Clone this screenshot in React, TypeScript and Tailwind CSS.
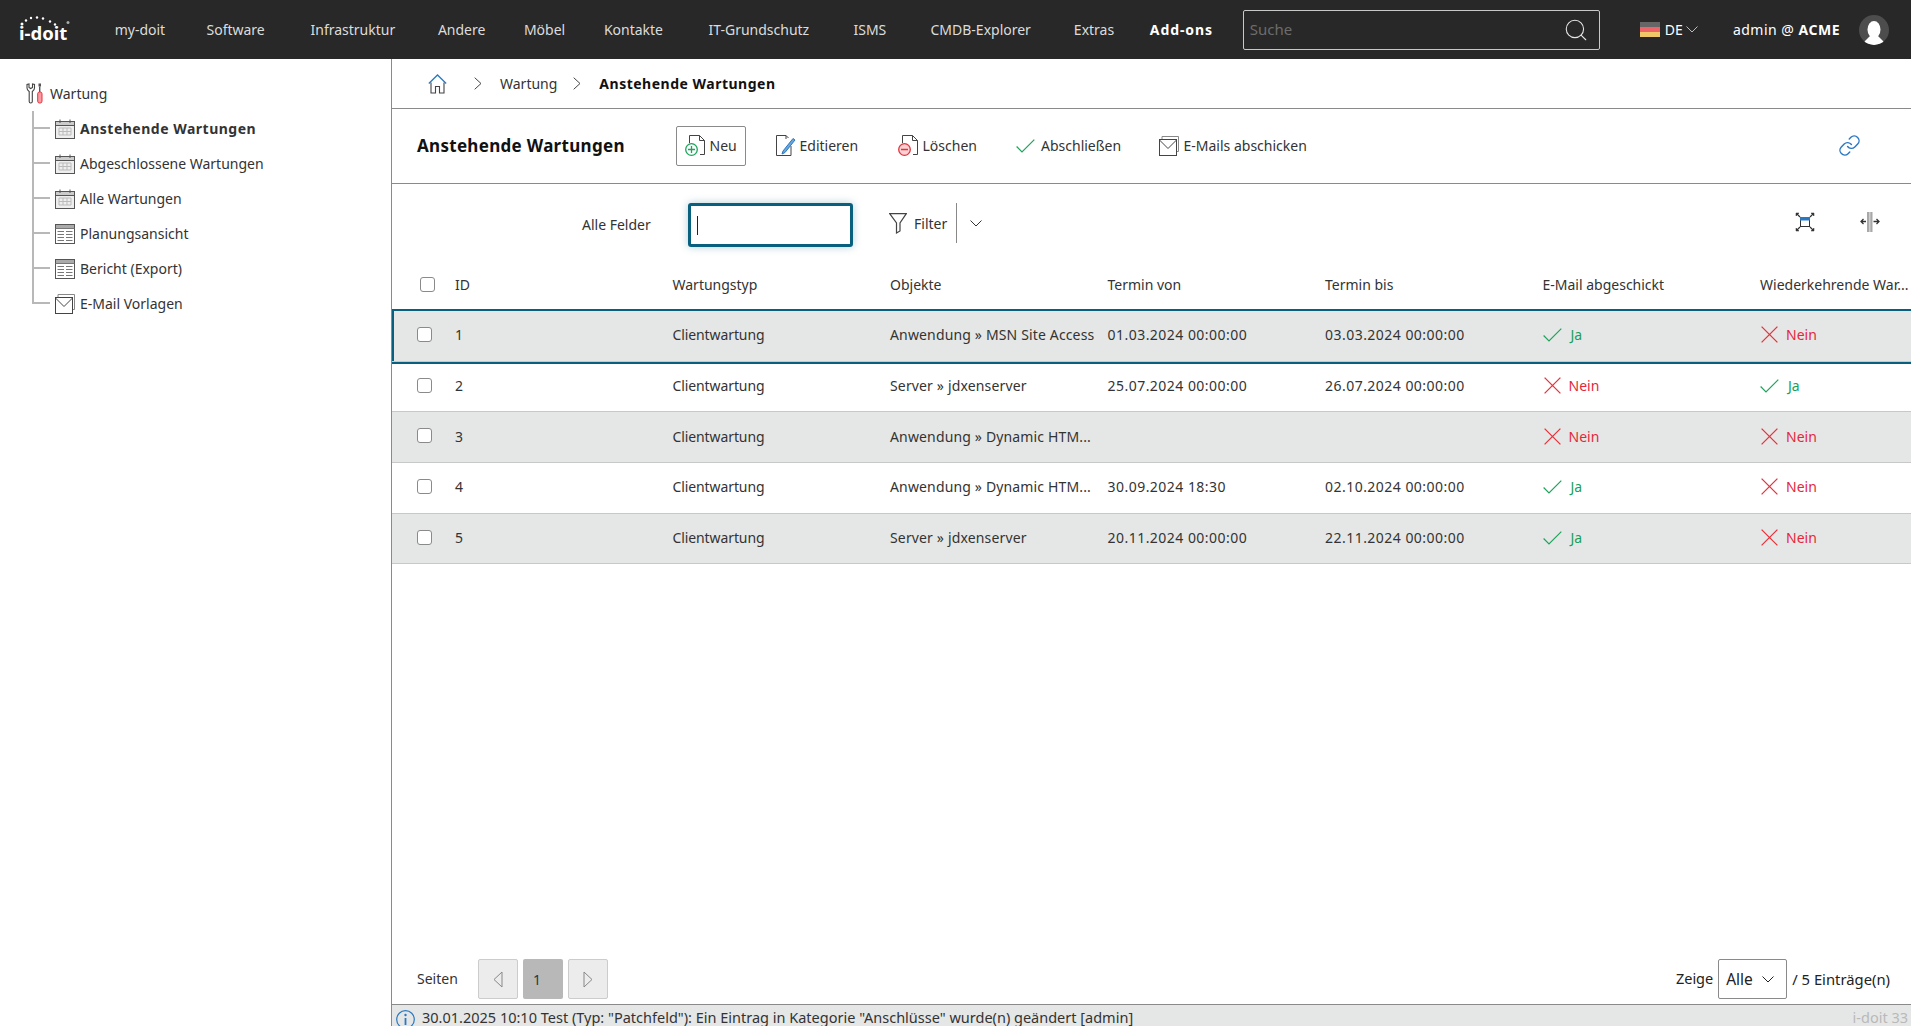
import { Link as LinkIcon, Search } from "lucide-react";

const navItems = [
  { label: "my-doit", width: "w-[91.8px]" },
  { label: "Software", width: "w-[104px]" },
  { label: "Infrastruktur", width: "w-[127.4px]" },
  { label: "Andere", width: "w-[86px]" },
  { label: "Möbel", width: "w-[80px]" },
  { label: "Kontakte", width: "w-[104.6px]" },
  { label: "IT-Grundschutz", width: "w-[145px]" },
  { label: "ISMS", width: "w-[77px]" },
  { label: "CMDB-Explorer", width: "w-[143.4px]" },
  { label: "Extras", width: "w-[76px]" },
];

const treeItems = [
  { label: "Anstehende Wartungen", icon: "calendar", active: true },
  { label: "Abgeschlossene Wartungen", icon: "calendar" },
  { label: "Alle Wartungen", icon: "calendar" },
  { label: "Planungsansicht", icon: "table" },
  { label: "Bericht (Export)", icon: "table" },
  { label: "E-Mail Vorlagen", icon: "mail" },
];

const columns = ["ID", "Wartungstyp", "Objekte", "Termin von", "Termin bis", "E-Mail abgeschickt", "Wiederkehrende War..."];

const rows = [
  { id: "1", obj: "Anwendung » MSN Site Access", from: "01.03.2024 00:00:00", to: "03.03.2024 00:00:00", mail: true, rec: false },
  { id: "2", obj: "Server » jdxenserver", from: "25.07.2024 00:00:00", to: "26.07.2024 00:00:00", mail: false, rec: true },
  { id: "3", obj: "Anwendung » Dynamic HTM...", from: "", to: "", mail: false, rec: false },
  { id: "4", obj: "Anwendung » Dynamic HTM...", from: "30.09.2024 18:30", to: "02.10.2024 00:00:00", mail: true, rec: false },
  { id: "5", obj: "Server » jdxenserver", from: "20.11.2024 00:00:00", to: "22.11.2024 00:00:00", mail: true, rec: false },
];

function Logo() {
  return (
    <div className="relative w-[114.700px] shrink-0 pl-[19px] pt-[7px] text-[18.500px] leading-[24px] font-bold text-white">
      i-doit
      <svg className="absolute left-[20px] top-[1px]" width="52" height="14" viewBox="0 0 52 14" fill="white">
        <circle cx="2" cy="9" r="1.500" />
        <circle cx="6" cy="5.500" r="1.200" />
        <circle cx="11" cy="3" r="1.200" />
        <circle cx="17" cy="2.500" r="1.200" />
        <circle cx="23" cy="3.500" r="1.200" />
        <circle cx="30" cy="6.500" r="1.200" />
        <circle cx="35" cy="9.500" r="1.200" />
        <circle cx="48" cy="7.500" r="1.500" fill="#aaa" />
      </svg>
    </div>
  );
}

function ChevronSmall({ className = "" }: { className?: string }) {
  return (
    <svg className={className} width="12" height="7" viewBox="0 0 12 7" fill="none" stroke="currentColor">
      <path d="M0.500 0.500L6 6L11.500 0.500" />
    </svg>
  );
}

function CalendarIcon() {
  return (
    <svg width="20" height="20" viewBox="0 0 20 20" fill="none">
      <rect x="0.500" y="2.500" width="19" height="17" fill="#eee" stroke="#555" />
      <rect x="1" y="3" width="18" height="3" fill="#ccc" />
      <path d="M0.500 6.500H19.500M5 0.500V4M15 0.500V4" stroke="#555" />
      <path d="M4 9H16V16H4ZM4 12.500H16M8 9V16M12 9V16" stroke="#bbb" />
    </svg>
  );
}

function TableIcon() {
  return (
    <svg width="20" height="20" viewBox="0 0 20 20" fill="none">
      <rect x="0.500" y="0.500" width="19" height="19" fill="#fff" stroke="#555" />
      <rect x="1" y="1" width="18" height="3.500" fill="#aaa" />
      <path d="M0.500 4.500H19.500M2.500 7.500H9M11 7.500H17.500M2.500 10.500H9M11 10.500H17.500M2.500 13.500H9M11 13.500H17.500M2.500 16.500H9M11 16.500H17.500" stroke="#777" />
    </svg>
  );
}

function MailIcon({ className = "" }: { className?: string }) {
  return (
    <svg className={className} width="20" height="20" viewBox="0 0 20 20" fill="none" stroke="#444">
      <path d="M3 3.500V0.500H19.500V15.500H17" stroke="#888" />
      <rect x="0.500" y="3.500" width="17" height="16" fill="#fff" />
      <path d="M0.500 4L9 12.500L17.500 4" />
    </svg>
  );
}

function TreeIcon({ name }: { name: string }) {
  if (name === "calendar") return <CalendarIcon />;
  if (name === "table") return <TableIcon />;
  return <MailIcon />;
}

function ToolsIcon() {
  return (
    <svg width="17" height="21" viewBox="0 0 17 21" fill="none">
      <path d="M1 1.500V5C1 7 2.500 8 3.200 8.500V18.500C3.200 20.500 6.300 20.500 6.300 18.500V8.500C7 8 8.500 7 8.500 5V1.500L6.500 1V4.500L4.700 5.500L3 4.500V1Z" stroke="#444" strokeWidth="1.100" />
      <rect x="12.500" y="0.500" width="2.500" height="3" fill="#555" />
      <path d="M13.700 3.500V9" stroke="#555" strokeWidth="1.400" />
      <rect x="11.700" y="9" width="4.300" height="11" rx="1.800" fill="#fb9aa0" stroke="#e5333c" />
    </svg>
  );
}

function HomeIcon() {
  return (
    <svg width="19" height="20" viewBox="0 0 19 20" fill="none">
      <path d="M0.800 9.500L9.500 1L18.200 9.500" stroke="#2a78c2" strokeWidth="1.300" />
      <path d="M3 8.500V19H7.500V12.500H11.500V19H16V8.500" stroke="#444" strokeWidth="1.100" />
    </svg>
  );
}

function PageOutline() {
  return <path d="M4.500 8V0.500H14.500L19.500 5.500V19.500H15M14.500 0.500V5.500H19.500" stroke="#444" />;
}

function NewIcon() {
  return (
    <svg width="21" height="21" viewBox="0 0 21 21" fill="none">
      <PageOutline />
      <circle cx="6.500" cy="14.500" r="5.800" fill="#fff" stroke="#1ea35b" strokeWidth="1.300" />
      <path d="M6.500 11V18M3 14.500H10" stroke="#1ea35b" strokeWidth="1.300" />
    </svg>
  );
}

function EditIcon() {
  return (
    <svg width="20" height="21" viewBox="0 0 20 21" fill="none">
      <path d="M0.500 20.500V0.500H10L12.500 3M15 11V20.500H0.500M10 0.500V4" stroke="#444" />
      <path d="M7 16L17 3.500L19 5L9 17.500L6 19Z" fill="#6aa6dc" stroke="#2a78c2" />
    </svg>
  );
}

function DeleteIcon() {
  return (
    <svg width="21" height="21" viewBox="0 0 21 21" fill="none">
      <PageOutline />
      <circle cx="6.500" cy="14.500" r="5.800" fill="#fbd2d4" stroke="#e5333c" strokeWidth="1.300" />
      <path d="M3 14.500H10" stroke="#e5333c" strokeWidth="1.500" />
    </svg>
  );
}

function CheckIcon() {
  return (
    <svg width="19" height="14" viewBox="0 0 19 14" fill="none">
      <path d="M0.600 7.500L6 13L18.300 0.600" stroke="#1ea35b" strokeWidth="1.200" />
    </svg>
  );
}

function CrossIcon() {
  return (
    <svg width="17" height="17" viewBox="0 0 17 17" fill="none">
      <path d="M0.600 0.600L16.400 16.400M16.400 0.600L0.600 16.400" stroke="#e5333c" strokeWidth="1.300" />
    </svg>
  );
}

function FunnelIcon() {
  return (
    <svg width="18" height="21" viewBox="0 0 18 21" fill="none">
      <path d="M0.700 0.700H17.300L11 10V18L7.500 20V10Z" stroke="#444" strokeWidth="1.200" />
    </svg>
  );
}

function ChevronRightSmall() {
  return (
    <svg width="8" height="13" viewBox="0 0 8 13" fill="none">
      <path d="M0.700 0.700L7 6.500L0.700 12.300" stroke="#444" />
    </svg>
  );
}

function FullscreenIcon() {
  return (
    <svg width="20" height="20" viewBox="0 0 20 20" fill="none">
      <path d="M1 1H4L1 4ZM19 1H16L19 4ZM19 19H16L19 16ZM1 19H4L1 16Z" fill="#333" stroke="#333" strokeWidth="0.500" />
      <path d="M2 2L5 5M18 2L15 5M18 18L15 15M2 18L5 15" stroke="#333" strokeWidth="1.200" />
      <rect x="5.500" y="5.500" width="9" height="9" fill="#fff" stroke="#333" />
      <rect x="5" y="5" width="10" height="3.500" fill="#2a78c2" />
    </svg>
  );
}

function ColumnResizeIcon() {
  return (
    <svg width="20" height="20" viewBox="0 0 20 20" fill="none">
      <rect x="7" y="0" width="5.500" height="20" fill="#a8a8a8" />
      <rect x="9.200" y="0" width="1.200" height="20" fill="#d8d8d8" />
      <path d="M1 9.500H6M3.500 7L1 9.500L3.500 12M13.500 9.500H19M16.500 7L19 9.500L16.500 12" stroke="#333" strokeWidth="1.300" />
    </svg>
  );
}

function InfoIcon() {
  return (
    <svg width="19" height="19" viewBox="0 0 19 19" fill="none">
      <circle cx="9.500" cy="9.500" r="8.800" stroke="#2a78c2" strokeWidth="1.200" />
      <path d="M9.500 8V15" stroke="#2a78c2" strokeWidth="1.800" />
      <circle cx="9.500" cy="5" r="1.200" fill="#2a78c2" />
    </svg>
  );
}

function Box() {
  return <span className="block h-[15px] w-[15px] rounded-[3px] border-[1.500px] border-[#8a8a8a] bg-white" />;
}

function YesNo({ value }: { value: boolean }) {
  return value ? (
    <div className="flex items-center gap-[9px] text-[#1a9f55]">
      <CheckIcon />
      <span>Ja</span>
    </div>
  ) : (
    <div className="flex items-center gap-[8px] pl-[1px] text-[#e6263c]">
      <CrossIcon />
      <span>Nein</span>
    </div>
  );
}

function TopBar() {
  return (
    <header className="flex h-[59px] shrink-0 items-center bg-[#282828] text-white">
      <Logo />
      {navItems.map((item) => (
        <span key={item.label} className={`${item.width} shrink-0 text-[14px] text-[#dcdcdc]`}>
          {item.label}
        </span>
      ))}
      <span className="w-[93px] shrink-0 text-[14px] font-bold tracking-[0.9px]">Add-ons</span>
      <div className="flex h-[40px] w-[357px] shrink-0 items-center rounded-[2px] border border-[#c8c8c8] pl-[6px] pr-[10px]">
        <span className="flex-1 text-[15px] text-[#6c6c6c]">Suche</span>
        <Search size={26} strokeWidth={1} className="text-[#e6e6e6]" />
      </div>
      <div className="ml-[40px] flex h-[16px] w-[20px] shrink-0 flex-col">
        <div className="flex-1 bg-[#666]" />
        <div className="flex-1 bg-[#ee6468]" />
        <div className="flex-1 bg-[#f0c868]" />
      </div>
      <span className="ml-[5px] text-[14px]">DE</span>
      <ChevronSmall className="ml-[3px] shrink-0 text-[#bbb]" />
      <span className="ml-[35px] whitespace-nowrap text-[14px] tracking-[0.5px]">
        admin @ <b>ACME</b>
      </span>
      <div className="ml-[19px] flex h-[30px] w-[30px] shrink-0 items-end justify-center overflow-hidden rounded-full bg-[#4d4d4d]">
        <svg width="20" height="24" viewBox="0 0 20 24" fill="white">
          <ellipse cx="10" cy="8.500" rx="6.500" ry="8.500" />
          <path d="M7 14L0 21C0 23 4 24 10 24C16 24 20 23 20 21L13 14Z" />
        </svg>
      </div>
    </header>
  );
}

function Sidebar() {
  return (
    <aside className="w-[392px] shrink-0 border-r border-[#8a8a8a] pt-[17px] text-[14px] text-[#333]">
      <div className="flex h-[35px] items-center gap-[7px] pl-[26px]">
        <ToolsIcon />
        <span>Wartung</span>
      </div>
      {treeItems.map((item, i) => (
        <div key={item.label} className="flex h-[35px] items-center">
          <div className="ml-[32px] flex h-full w-[18px] flex-col">
            <div className="h-1/2 border-b-2 border-l-2 border-[#b8b8b8]" />
            {i < treeItems.length - 1 && <div className="h-1/2 border-l-2 border-[#b8b8b8]" />}
          </div>
          <div className="ml-[5px]">
            <TreeIcon name={item.icon} />
          </div>
          <span className={item.active ? "ml-[5px] font-bold tracking-[0.5px]" : "ml-[5px]"}>{item.label}</span>
        </div>
      ))}
    </aside>
  );
}

function Toolbar() {
  return (
    <div className="flex h-[75px] shrink-0 items-center border-b border-[#8a8a8a] pb-[1px] pl-[25px] pr-[50px] text-[#333]">
      <h1 className="w-[258.500px] shrink-0 text-[17px] font-bold tracking-[0.3px] text-[#111]">Anstehende Wartungen</h1>
      <button className="flex h-[40px] w-[70px] shrink-0 items-center gap-[4px] rounded-[2px] border border-[#8a8a8a] pl-[8px]">
        <NewIcon />
        <span>Neu</span>
      </button>
      <div className="ml-[30px] flex w-[122px] shrink-0 items-center gap-[4px]">
        <EditIcon />
        <span>Editieren</span>
      </div>
      <div className="flex w-[118.500px] shrink-0 items-center gap-[4px]">
        <DeleteIcon />
        <span>Löschen</span>
      </div>
      <div className="flex w-[142.500px] shrink-0 items-center gap-[6px]">
        <CheckIcon />
        <span>Abschließen</span>
      </div>
      <div className="flex shrink-0 items-center gap-[5px]">
        <MailIcon />
        <span>E-Mails abschicken</span>
      </div>
      <LinkIcon size={23} strokeWidth={1.500} className="ml-auto text-[#2a78c2]" />
    </div>
  );
}

function FilterRow() {
  return (
    <div className="flex h-[78px] shrink-0 items-start pl-[190px] pr-[31px] text-[#333]">
      <span className="mt-[30px] w-[106px] shrink-0">Alle Felder</span>
      <div className="mt-[19px] flex h-[44px] w-[165px] shrink-0 items-center rounded-[3px] border-[3px] border-[#08607e] pl-[6px] shadow-[0_0_8px_rgba(8,96,126,0.3)]">
        <span className="h-[19px] w-px bg-[#222]" />
      </div>
      <div className="ml-[36px] mt-[29px] flex shrink-0 items-center gap-[7px]">
        <FunnelIcon />
        <span>Filter</span>
      </div>
      <div className="ml-[9px] mt-[19px] h-[40px] w-px shrink-0 bg-[#888]" />
      <ChevronSmall className="ml-[13px] mt-[36px] shrink-0" />
      <div className="ml-auto mt-[28px] flex gap-[45px]">
        <FullscreenIcon />
        <ColumnResizeIcon />
      </div>
    </div>
  );
}

function DataTable() {
  return (
    <div className="text-[#333]">
      <div className="grid h-[49px] grid-cols-[63px_repeat(6,217.500px)_1fr] items-center pb-[4px]">
        <div className="pl-[28px]">
          <Box />
        </div>
        {columns.map((c) => (
          <span key={c} className="whitespace-nowrap">{c}</span>
        ))}
      </div>
      {rows.map((row, i) => (
        <div
          key={row.id}
          className={`relative grid h-[50.700px] grid-cols-[63px_repeat(6,217.500px)_1fr] items-center border-b border-[#c8c8c8] pb-[2px] ${
            i % 2 === 0 ? "bg-[#e5e7e6]" : "bg-white"
          } ${i === 0 ? "z-10 shadow-[inset_2px_0_0_#08607e,0_-2px_0_#08607e,0_2px_0_#08607e]" : ""}`}
        >
          <div className="-mt-[1px] pl-[24.500px]">
            <Box />
          </div>
          <span>{row.id}</span>
          <span className="tracking-[-0.1px]">Clientwartung</span>
          <span className="whitespace-nowrap tracking-[0.15px]">{row.obj}</span>
          <span className="tracking-[0.47px]">{row.from}</span>
          <span className="tracking-[0.47px]">{row.to}</span>
          <YesNo value={row.mail} />
          <YesNo value={row.rec} />
        </div>
      ))}
    </div>
  );
}

function Pager() {
  return (
    <div className="flex h-[45px] shrink-0 items-start pl-[25px] pr-[21px] text-[#333]">
      <span className="mt-[9px] w-[61px] shrink-0">Seiten</span>
      <div className="flex gap-[5px]">
        <div className="flex h-[40px] w-[40px] items-center justify-center rounded-[2px] border border-[#ccc] bg-[#ececec]">
          <svg width="10" height="17" viewBox="0 0 10 17" fill="none">
            <path d="M9 1L1 8.500L9 16Z" stroke="#888" />
          </svg>
        </div>
        <div className="flex h-[40px] w-[40px] items-center justify-center rounded-[2px] bg-[#b8b8b8] pr-[12px]">1</div>
        <div className="flex h-[40px] w-[40px] items-center justify-center rounded-[2px] border border-[#ccc] bg-[#ececec]">
          <svg width="10" height="17" viewBox="0 0 10 17" fill="none">
            <path d="M1 1L9 8.500L1 16Z" stroke="#888" />
          </svg>
        </div>
      </div>
      <span className="ml-auto mt-[9px] text-[14.500px] text-[#222]">Zeige</span>
      <div className="ml-[5px] flex h-[40px] w-[69px] items-center rounded-[2px] border border-[#8a8a8a] pl-[7px] pt-[1px] text-[15.500px] text-[#222]">
        <span>Alle</span>
        <ChevronSmall className="ml-[9px] shrink-0" />
      </div>
      <span className="ml-[5px] mt-[9px] text-[14.800px] text-[#222]">/ 5 Einträge(n)</span>
    </div>
  );
}

function StatusBar() {
  return (
    <div className="flex h-[22px] shrink-0 items-start gap-[7px] overflow-hidden border-t border-[#8a8a8a] bg-[#e5e7e6] pl-[4px] pr-[3px] pt-[5px] text-[14.500px] text-[#333]">
      <InfoIcon />
      <span className="-mt-[3px] whitespace-nowrap">
        30.01.2025 10:10 Test (Typ: "Patchfeld"): Ein Eintrag in Kategorie "Anschlüsse" wurde(n) geändert [admin]
      </span>
      <span className="-mt-[3px] ml-auto text-[#b9b9b9]">i-doit 33</span>
    </div>
  );
}

export default function App() {
  return (
    <div className="flex h-screen w-full flex-col overflow-hidden bg-white font-['Noto_Sans',sans-serif] text-[14px]">
      <TopBar />
      <div className="flex min-h-0 flex-1">
        <Sidebar />
        <main className="flex min-w-0 flex-1 flex-col">
          <div className="flex h-[50px] shrink-0 items-center border-b border-[#8a8a8a] pl-[36px] text-[#333]">
            <HomeIcon />
            <span className="ml-[27px]">
              <ChevronRightSmall />
            </span>
            <span className="ml-[18px]">Wartung</span>
            <span className="ml-[16px]">
              <ChevronRightSmall />
            </span>
            <span className="ml-[18px] font-bold tracking-[0.5px] text-[#111]">Anstehende Wartungen</span>
          </div>
          <Toolbar />
          <FilterRow />
          <DataTable />
          <div className="flex-1" />
          <Pager />
          <StatusBar />
        </main>
      </div>
    </div>
  );
}
